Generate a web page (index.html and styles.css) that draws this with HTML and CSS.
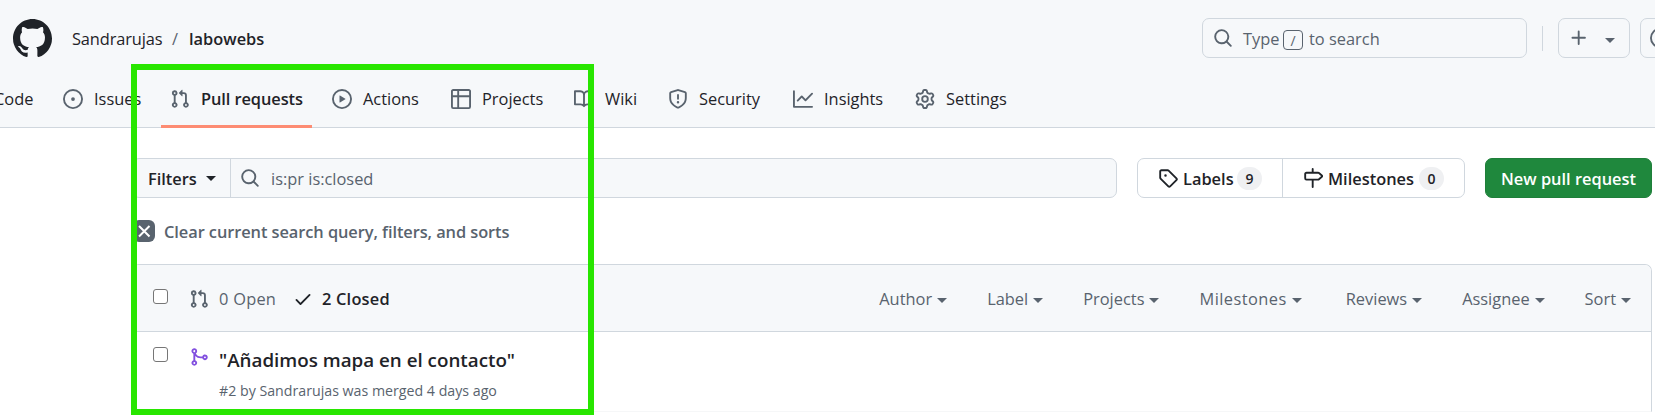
FILE: index.html
```
<!DOCTYPE html>
<html lang="en">
<head>
<meta charset="utf-8">
<title>Pull requests · Sandrarujas/labowebs</title>
<link rel="stylesheet" href="styles.css">
</head>
<body>
<svg class="defs" width="0" height="0">
  <symbol id="pr" viewBox="0 0 16 16"><path d="M1.5 3.25a2.25 2.25 0 1 1 3 2.122v5.256a2.251 2.251 0 1 1-1.5 0V5.372A2.25 2.25 0 0 1 1.5 3.25Zm5.677-.177L9.573.677A.25.25 0 0 1 10 .854V2.5h1A2.5 2.5 0 0 1 13.5 5v5.628a2.251 2.251 0 1 1-1.5 0V5a1 1 0 0 0-1-1h-1v1.646a.25.25 0 0 1-.427.177L7.177 3.427a.25.25 0 0 1 0-.354ZM3.75 2.5a.75.75 0 1 0 0 1.5.75.75 0 0 0 0-1.5Zm0 9.5a.75.75 0 1 0 0 1.5.75.75 0 0 0 0-1.5Zm8.25.75a.75.75 0 1 0 1.5 0 .75.75 0 0 0-1.5 0Z"/></symbol>
  <symbol id="search" viewBox="0 0 16 16"><path d="M10.68 11.74a6 6 0 0 1-7.922-8.982 6 6 0 0 1 8.982 7.922l3.04 3.04a.749.749 0 1 1-1.06 1.06ZM11.5 7a4.499 4.499 0 1 0-8.997 0A4.499 4.499 0 0 0 11.5 7Z"/></symbol>
  <symbol id="caret" viewBox="0 0 10 5"><path d="M0 0h10L5 5Z"/></symbol>
</svg>

<header class="header">
  <div class="topbar">
    <svg class="logo" viewBox="0 0 16 16"><path d="M8 0c4.42 0 8 3.58 8 8a8.013 8.013 0 0 1-5.45 7.59c-.4.08-.55-.17-.55-.38 0-.27.01-1.13.01-2.2 0-.75-.25-1.23-.54-1.48 1.78-.2 3.65-.88 3.65-3.95 0-.88-.31-1.59-.82-2.15.08-.2.36-1.02-.08-2.12 0 0-.67-.22-2.2.82-.64-.18-1.32-.27-2-.27-.68 0-1.36.09-2 .27-1.53-1.03-2.2-.82-2.2-.82-.44 1.1-.16 1.92-.08 2.12-.51.56-.82 1.28-.82 2.15 0 3.06 1.86 3.75 3.64 3.95-.23.2-.44.55-.51 1.07-.46.21-1.61.55-2.33-.66-.15-.24-.6-.83-1.23-.82-.67.01-.27.38.01.53.34.19.73.9.82 1.13.16.45.68 1.31 2.69.94 0 .67.01 1.3.01 1.49 0 .21-.15.45-.55.38A7.995 7.995 0 0 1 0 8c0-4.42 3.58-8 8-8Z"/></svg>
    <div class="crumbs"><a class="owner">Sandrarujas</a><span class="slash">/</span><a class="repo">labowebs</a></div>
    <div class="search">
      <svg class="icon"><use href="#search"/></svg>
      <span class="type">Type</span><kbd>/</kbd><span>to search</span>
    </div>
    <div class="rule"></div>
    <div class="create">
      <svg class="icon" viewBox="0 0 16 16"><path d="M7.75 2a.75.75 0 0 1 .75.75V7h4.25a.75.75 0 0 1 0 1.5H8.5v4.25a.75.75 0 0 1-1.5 0V8.5H2.75a.75.75 0 0 1 0-1.5H7V2.75A.75.75 0 0 1 7.75 2Z"/></svg>
      <svg class="caret"><use href="#caret"/></svg>
    </div>
    <div class="issues-button">
      <svg class="icon" viewBox="0 0 16 16"><path d="M8 9.5a1.5 1.5 0 1 0 0-3 1.5 1.5 0 0 0 0 3Z"/><path d="M8 0a8 8 0 1 1 0 16A8 8 0 0 1 8 0ZM1.5 8a6.5 6.5 0 1 0 13 0 6.5 6.5 0 0 0-13 0Z"/></svg>
    </div>
  </div>
  <nav class="nav">
    <a class="code"><span>Code</span></a>
    <a><svg class="icon" viewBox="0 0 16 16"><path d="M8 9.5a1.5 1.5 0 1 0 0-3 1.5 1.5 0 0 0 0 3Z"/><path d="M8 0a8 8 0 1 1 0 16A8 8 0 0 1 8 0ZM1.5 8a6.5 6.5 0 1 0 13 0 6.5 6.5 0 0 0-13 0Z"/></svg><span>Issues</span></a>
    <a class="selected"><svg class="icon"><use href="#pr"/></svg><span>Pull requests</span></a>
    <a><svg class="icon" viewBox="0 0 16 16"><path d="M8 0a8 8 0 1 1 0 16A8 8 0 0 1 8 0ZM1.5 8a6.5 6.5 0 1 0 13 0 6.5 6.5 0 0 0-13 0Zm4.879-2.773 4.264 2.559a.25.25 0 0 1 0 .428l-4.264 2.559A.25.25 0 0 1 6 10.559V5.442a.25.25 0 0 1 .379-.215Z"/></svg><span>Actions</span></a>
    <a><svg class="icon" viewBox="0 0 16 16"><path d="M0 1.75C0 .784.784 0 1.75 0h12.5C15.216 0 16 .784 16 1.75v12.5A1.75 1.75 0 0 1 14.25 16H1.75A1.75 1.75 0 0 1 0 14.25ZM6.5 6.5v8h7.75a.25.25 0 0 0 .25-.25V6.5Zm8-1.5V1.75a.25.25 0 0 0-.25-.25H6.5V5Zm-13 1.5v7.75c0 .138.112.25.25.25H5v-8ZM5 5V1.5H1.75a.25.25 0 0 0-.25.25V5Z"/></svg><span>Projects</span></a>
    <a><svg class="icon" viewBox="0 0 16 16"><path d="M0 1.75A.75.75 0 0 1 .75 1h4.253c1.227 0 2.317.59 3 1.501A3.743 3.743 0 0 1 11.006 1h4.245a.75.75 0 0 1 .75.75v10.5a.75.75 0 0 1-.75.75h-4.507a2.25 2.25 0 0 0-1.591.659l-.622.621a.75.75 0 0 1-1.06 0l-.622-.621A2.25 2.25 0 0 0 5.258 13H.75a.75.75 0 0 1-.75-.75Zm7.251 10.324.004-5.073-.002-2.253A2.25 2.25 0 0 0 5.003 2.5H1.5v9h3.757a3.75 3.75 0 0 1 1.994.574ZM8.755 4.75l-.004 7.322a3.752 3.752 0 0 1 1.992-.572H14.5v-9h-3.495a2.25 2.25 0 0 0-2.25 2.25Z"/></svg><span>Wiki</span></a>
    <a><svg class="icon" viewBox="0 0 16 16"><path d="M7.467.133a1.748 1.748 0 0 1 1.066 0l5.25 1.68A1.75 1.75 0 0 1 15 3.48V7c0 1.566-.32 3.182-1.303 4.682-.983 1.498-2.585 2.813-5.032 3.855a1.697 1.697 0 0 1-1.33 0c-2.447-1.042-4.049-2.357-5.032-3.855C1.32 10.182 1 8.566 1 7V3.48a1.75 1.75 0 0 1 1.217-1.667Zm.61 1.429a.25.25 0 0 0-.153 0l-5.25 1.68a.25.25 0 0 0-.174.238V7c0 1.358.275 2.666 1.057 3.86.784 1.194 2.121 2.34 4.366 3.297a.196.196 0 0 0 .154 0c2.245-.956 3.582-2.104 4.366-3.298C13.225 9.666 13.5 8.36 13.5 7V3.48a.251.251 0 0 0-.174-.237ZM8.75 4.75v3a.75.75 0 0 1-1.5 0v-3a.75.75 0 0 1 1.5 0ZM9 10.5a1 1 0 1 1-2 0 1 1 0 0 1 2 0Z"/></svg><span>Security</span></a>
    <a><svg class="icon" viewBox="0 0 16 16"><path d="M1.5 1.75V13.5h13.75a.75.75 0 0 1 0 1.5H.75a.75.75 0 0 1-.75-.75V1.75a.75.75 0 0 1 1.5 0Zm14.28 2.53-5.25 5.25a.75.75 0 0 1-1.06 0L7 7.06 4.28 9.78a.751.751 0 0 1-1.06-1.06l3.25-3.25a.75.75 0 0 1 1.06 0L10 7.94l4.72-4.72a.751.751 0 0 1 1.06 1.06Z"/></svg><span>Insights</span></a>
    <a><svg class="icon" viewBox="0 0 16 16"><path d="M8 0a8.2 8.2 0 0 1 .701.031C9.444.095 9.99.645 10.16 1.29l.288 1.107c.018.066.079.158.212.224.231.114.454.243.668.386.123.082.233.09.299.071l1.103-.303c.644-.176 1.392.021 1.82.63.27.385.506.792.704 1.218.315.675.111 1.422-.364 1.891l-.814.806c-.049.048-.098.147-.088.294.016.257.016.515 0 .772-.01.147.038.246.088.294l.814.806c.475.469.679 1.216.364 1.891a7.977 7.977 0 0 1-.704 1.217c-.428.61-1.176.807-1.82.63l-1.102-.302c-.067-.019-.177-.011-.3.071a5.909 5.909 0 0 1-.668.386c-.133.066-.194.158-.211.224l-.29 1.106c-.168.646-.715 1.196-1.458 1.26a8.006 8.006 0 0 1-1.402 0c-.743-.064-1.289-.614-1.458-1.26l-.289-1.106c-.018-.066-.079-.158-.212-.224a5.738 5.738 0 0 1-.668-.386c-.123-.082-.233-.09-.299-.071l-1.103.303c-.644.176-1.392-.021-1.82-.63a8.12 8.12 0 0 1-.704-1.218c-.315-.675-.111-1.422.363-1.891l.815-.806c.05-.048.098-.147.088-.294a6.214 6.214 0 0 1 0-.772c.01-.147-.038-.246-.088-.294l-.815-.806C.635 6.045.431 5.298.746 4.623a7.92 7.92 0 0 1 .704-1.217c.428-.61 1.176-.807 1.82-.63l1.102.302c.067.019.177.011.3-.071.214-.143.437-.272.668-.386.133-.066.194-.158.211-.224l.29-1.106C6.009.645 6.556.095 7.299.03 7.53.01 7.764 0 8 0Zm-.571 1.525c-.036.003-.108.036-.137.146l-.289 1.105c-.147.561-.549.967-.998 1.189-.173.086-.34.183-.5.29-.417.278-.97.423-1.529.27l-1.103-.303c-.109-.03-.175.016-.195.045-.22.312-.412.644-.573.99-.014.031-.021.11.059.19l.815.806c.411.406.562.957.53 1.456a4.709 4.709 0 0 0 0 .582c.032.499-.119 1.05-.53 1.456l-.815.806c-.081.08-.073.159-.059.19.162.346.353.677.573.989.02.03.085.076.195.046l1.102-.303c.56-.153 1.113-.008 1.53.27.161.107.328.204.501.29.447.222.85.629.997 1.189l.289 1.105c.029.109.101.143.137.146a6.6 6.6 0 0 0 1.142 0c.036-.003.108-.036.137-.146l.289-1.105c.147-.561.549-.967.998-1.189.173-.086.34-.183.5-.29.417-.278.97-.423 1.529-.27l1.103.303c.109.029.175-.016.195-.045.22-.313.411-.644.573-.99.014-.031.021-.11-.059-.19l-.815-.806c-.411-.406-.562-.957-.53-1.456a4.709 4.709 0 0 0 0-.582c-.032-.499.119-1.05.53-1.456l.815-.806c.081-.08.073-.159.059-.19a6.464 6.464 0 0 0-.573-.989c-.02-.03-.085-.076-.195-.046l-1.102.303c-.56.153-1.113.008-1.53-.27a4.44 4.44 0 0 0-.501-.29c-.447-.222-.85-.629-.997-1.189l-.289-1.105c-.029-.11-.101-.143-.137-.146a6.6 6.6 0 0 0-1.142 0ZM11 8a3 3 0 1 1-6 0 3 3 0 0 1 6 0ZM9.5 8a1.5 1.5 0 1 0-3.001.001A1.5 1.5 0 0 0 9.5 8Z"/></svg><span>Settings</span></a>
  </nav>
</header>

<main class="main">
  <div class="toolbar">
    <div class="query">
      <div class="filters"><span>Filters</span><svg class="caret"><use href="#caret"/></svg></div>
      <div class="field"><svg class="icon"><use href="#search"/></svg><span>is:pr is:closed</span></div>
    </div>
    <div class="group">
      <a class="labels"><svg class="icon" viewBox="0 0 16 16"><path d="M1 7.775V2.75C1 1.784 1.784 1 2.75 1h5.025c.464 0 .91.184 1.238.513l6.25 6.25a1.75 1.75 0 0 1 0 2.474l-5.026 5.026a1.75 1.75 0 0 1-2.474 0l-6.25-6.25A1.752 1.752 0 0 1 1 7.775Zm1.5 0c0 .066.026.13.073.177l6.25 6.25a.25.25 0 0 0 .354 0l5.025-5.025a.25.25 0 0 0 0-.354l-6.25-6.25a.25.25 0 0 0-.177-.073H2.75a.25.25 0 0 0-.25.25ZM6 5a1 1 0 1 1 0 2 1 1 0 0 1 0-2Z"/></svg><span class="name">Labels</span><span class="count">9</span></a>
      <a class="milestones"><svg class="icon" viewBox="0 0 16 16"><path d="M7.75 0a.75.75 0 0 1 .75.75V3h3.634c.414 0 .814.147 1.13.414l2.07 1.75a1.75 1.75 0 0 1 0 2.672l-2.07 1.75a1.75 1.75 0 0 1-1.13.414H8.5v5.25a.75.75 0 0 1-1.5 0V10H2.75A1.75 1.75 0 0 1 1 8.25v-3.5C1 3.784 1.784 3 2.75 3H7V.75A.75.75 0 0 1 7.75 0Zm4.384 8.5a.25.25 0 0 0 .161-.06l2.07-1.75a.248.248 0 0 0 0-.38l-2.07-1.75a.25.25 0 0 0-.161-.06H2.75a.25.25 0 0 0-.25.25v3.5c0 .138.112.25.25.25h9.384Z"/></svg><span class="name">Milestones</span><span class="count">0</span></a>
    </div>
    <a class="new">New pull request</a>
  </div>

  <div class="clear">
    <svg class="clear-icon" viewBox="0 0 22 22"><rect width="22" height="22" rx="6"/><path d="M6 6l10.5 10.5M16.5 6L6 16.5"/></svg>
    <span>Clear current search query, filters, and sorts</span>
  </div>

  <section class="list">
    <div class="list-head">
      <i class="checkbox"></i>
      <svg class="icon"><use href="#pr"/></svg>
      <span class="open">0 Open</span>
      <svg class="icon check" viewBox="0 0 16 16"><path d="M13.78 4.22a.75.75 0 0 1 0 1.06l-7.25 7.25a.75.75 0 0 1-1.06 0L2.22 9.28a.751.751 0 0 1 1.06-1.06L6 10.94l6.72-6.72a.75.75 0 0 1 1.06 0Z"/></svg>
      <span class="closed">2 Closed</span>
      <div class="menus">
        <span>Author<svg class="caret"><use href="#caret"/></svg></span>
        <span>Label<svg class="caret"><use href="#caret"/></svg></span>
        <span>Projects<svg class="caret"><use href="#caret"/></svg></span>
        <span class="wide">Milestones<svg class="caret"><use href="#caret"/></svg></span>
        <span>Reviews<svg class="caret"><use href="#caret"/></svg></span>
        <span>Assignee<svg class="caret"><use href="#caret"/></svg></span>
        <span>Sort<svg class="caret"><use href="#caret"/></svg></span>
      </div>
    </div>
    <div class="row">
      <i class="checkbox"></i>
      <svg class="icon merged" viewBox="0 0 16 16"><path d="M5.45 5.154A4.25 4.25 0 0 0 9.25 7.5h1.378a2.251 2.251 0 1 1 0 1.5H9.25A5.734 5.734 0 0 1 5 7.123v3.505a2.25 2.25 0 1 1-1.5 0V5.372a2.25 2.25 0 1 1 1.95-.218ZM4.25 13.5a.75.75 0 1 0 0-1.5.75.75 0 0 0 0 1.5Zm8.5-4.5a.75.75 0 1 0 0-1.5.75.75 0 0 0 0 1.5ZM5 3.25a.75.75 0 1 0 0 .005V3.25Z"/></svg>
      <div class="entry">
        <div class="title">"Añadimos mapa en el contacto"</div>
        <div class="meta">#2 by Sandrarujas was merged 4 days ago</div>
      </div>
    </div>
  </section>
</main>
<div class="highlight"></div>
</body>
</html>
```
FILE: styles.css
```
* { box-sizing: border-box; }
body {
  margin: 0;
  width: 1655px;
  height: 416px;
  overflow: hidden;
  background: #fff;
  color: #1f2328;
  font: 16.4px/26px "Open Sans", "Noto Sans", sans-serif;
  white-space: nowrap;
}
.defs { position: absolute; }
svg { display: block; flex: none; fill: currentColor; }
.icon { width: 20px; height: 20px; }
.caret { width: 10px; height: 5px; }

.header { height: 128px; background: #f6f8fa; border-bottom: 1px solid #d0d7de; }
.topbar { display: flex; align-items: center; height: 76px; padding-left: 13px; }
.logo { width: 39px; height: 39px; margin-right: 20px; }
.crumbs { display: flex; flex: none; width: 1130px; padding-top: 2px; }
.owner { width: 100px; letter-spacing: -0.13px; }
.slash { width: 17px; color: #59636e; }
.repo { font-weight: 600; }
.search {
  display: flex;
  align-items: center;
  flex: none;
  width: 325px;
  height: 40px;
  padding-left: 10px;
  border: 1px solid #d0d7de;
  border-radius: 7px;
  color: #59636e;
}
.search span { padding-top: 1px; }
.type { width: 40px; margin-left: 10px; }
kbd {
  width: 20px;
  height: 20px;
  margin: 4px 6px 0 0;
  border: 1px solid #59636e;
  border-radius: 4px;
  font: 14px/19px "Open Sans", sans-serif;
  text-align: center;
}
.rule { flex: none; width: 1px; height: 25px; margin: 0 15px; background: #d0d7de; }
.create, .issues-button {
  display: flex;
  flex: none;
  align-items: center;
  height: 40px;
  border: 1px solid #d0d7de;
  border-radius: 7px;
  color: #59636e;
}
.create { width: 72px; padding-left: 10px; gap: 16px; }
.create .caret { margin-top: 4px; }
.issues-button { width: 40px; margin-left: 10px; padding-left: 9px; }

.nav {
  display: grid;
  grid-template-columns: 69px 98px 171px 119px 123px 94px 125px 122px 130px;
  height: 52px;
  margin-left: -6px;
}
.nav a { display: flex; gap: 11px; height: 46px; align-items: center; }
.nav .icon { color: #59636e; }
.nav .selected {
  width: 151px;
  height: 52px;
  padding: 0 0 6px 9px;
  font-weight: 600;
  letter-spacing: -0.08px;
  background: linear-gradient(#fd8c73, #fd8c73) bottom / 100% 3px no-repeat;
}

.main { padding: 30px 3px 0 132px; }
.toolbar { display: flex; height: 40px; gap: 20px; font-weight: 600; }
.query {
  display: flex;
  width: 985px;
  border: 1px solid #d0d7de;
  border-radius: 7px;
  background: #f6f8fa;
}
.filters {
  display: flex;
  align-items: center;
  justify-content: space-between;
  width: 98px;
  padding: 0 14px 0 15px;
  border-right: 1px solid #d0d7de;
}
.filters span, .name { padding-top: 1px; }
.field { display: flex; align-items: center; gap: 11px; padding-left: 9px; color: #59636e; font-weight: 400; }
.field span { padding-top: 2px; }
.group { display: flex; width: 328px; border: 1px solid #d0d7de; border-radius: 7px; }
.group a { display: flex; align-items: center; }
.labels { width: 145px; padding-left: 20px; border-right: 1px solid #d0d7de; }
.milestones { padding-left: 20px; }
.name { margin-left: 5px; }
.labels .name { width: 54px; }
.milestones .name { width: 91px; }
.count {
  width: 25px;
  height: 23px;
  border-radius: 12px;
  background: #eff0f2;
  font-size: 14px;
  line-height: 23px;
  text-align: center;
}
.new {
  width: 167px;
  border: 1px solid #1f7f3a;
  border-radius: 7px;
  background: #1f883d;
  color: #fff;
  line-height: 39px;
  text-align: center;
}
.clear { display: flex; align-items: center; gap: 9px; height: 26px; margin-top: 20px; padding-left: 1px; color: #59636e; font-weight: 600; letter-spacing: -0.07px; }
.clear span { padding-top: 1px; }
.clear-icon { width: 22px; height: 22px; }
.clear-icon path { fill: none; stroke: #fff; stroke-width: 2; }

.list { margin-top: 20px; height: 148px; border: 1px solid #d0d7de; border-bottom: 1px solid #f6f7f8; border-radius: 7px 7px 0 0; }
.list-head {
  display: flex;
  align-items: center;
  height: 67px;
  padding: 2px 20px 0 20px;
  border-bottom: 1px solid #d0d7de;
  border-radius: 6px 6px 0 0;
  background: #f6f8fa;
  color: #59636e;
}
.checkbox { flex: none; width: 15px; height: 15px; border: 1px solid #767676; border-radius: 3px; background: #fff; }
.list-head .checkbox { margin: -5px 21px 0 0; }
.open { width: 74px; margin-left: 10px; letter-spacing: 0.25px; }
.check { color: #1f2328; }
.closed { margin-left: 9px; color: #1f2328; font-weight: 600; letter-spacing: 0.2px; }
.menus { display: flex; gap: 40px; margin-left: auto; }
.menus span { display: flex; align-items: center; gap: 5px; }
.menus .wide { margin-right: 4px; letter-spacing: 0.45px; }
.menus .caret { margin-top: 3px; }
.row { display: flex; padding: 15px 0 0 20px; }
.merged { margin: 0 9px 0 21px; color: #8250df; }
.entry { margin-left: 1px; }
.title { margin-top: -1px; font-size: 18.8px; font-weight: 600; line-height: 28px; }
.meta { margin-top: 5px; color: #59636e; font-size: 14.2px; line-height: 24px; }

/* Annotation frame drawn over the page */
.highlight { position: absolute; left: 131px; top: 64px; width: 463px; height: 351px; border: 6px solid #28e600; }
```
